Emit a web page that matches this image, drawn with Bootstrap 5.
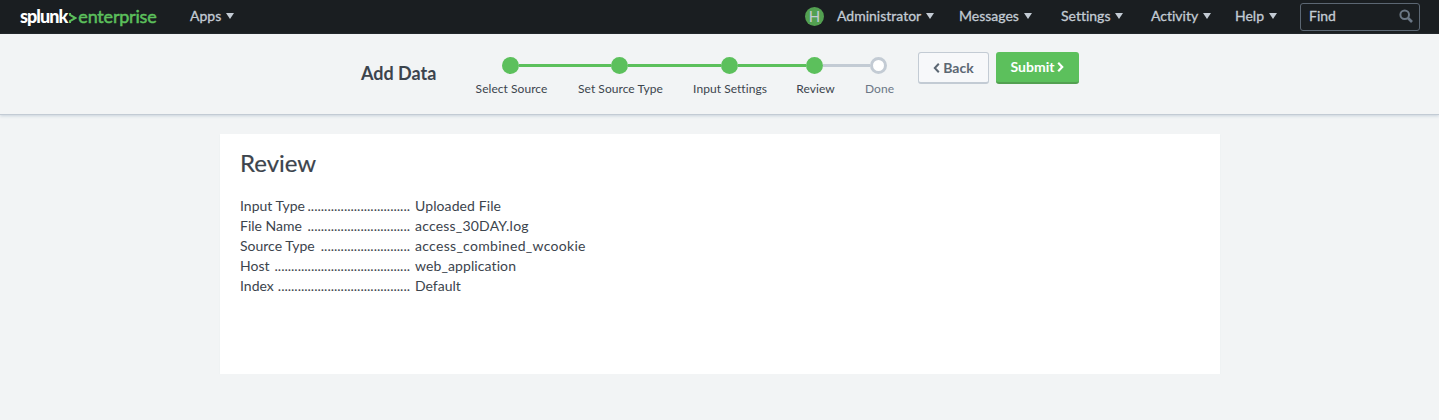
<!DOCTYPE html>
<html lang="en">
<head>
<meta charset="utf-8">
<meta name="viewport" content="width=device-width, initial-scale=1">
<title>Add Data - Review</title>
<link href="https://cdn.jsdelivr.net/npm/bootstrap@5.3.0/dist/css/bootstrap.min.css" rel="stylesheet">
<style>
  body { background: #f2f4f5; color: #3c444d; font: 14px/20px Lato, "Liberation Sans", sans-serif; font-variant-ligatures: none; overflow: hidden; }
  .topbar { height: 34px; background: #1a1e21; color: #c3cbd4; font-size: 14px; padding: 0 19px 0 20px; }
  .topbar a { color: inherit; text-decoration: none; white-space: nowrap; }
  .brand { width: 170px; font-size: 18px; line-height: 34px; margin-top: -2px; }
  .brand-a { color: #fff; font-weight: 900; letter-spacing: -.95px; }
  .brand-b { color: #5cc05c; letter-spacing: -.2px; -webkit-text-stroke: .5px; }
  .brand-b svg { margin: 0 1px 0 2px; vertical-align: -1px; }
  .menu { -webkit-text-stroke: .3px; line-height: 32px; height: 34px; }
  .menu::after { content: ""; display: inline-block; margin-left: 5px; vertical-align: 2px; border: 4px solid transparent; border-top: 6px solid #c3cbd4; border-bottom: 0; }
  .w-admin { width: 122px; } .w-msg { width: 102px; } .w-set { width: 90px; } .w-act { width: 84px; } .w-help { width: 65px; }
  .avatar { width: 19px; height: 19px; background: #53a051; margin: -2px 13px 0 0; font-size: 15px; line-height: 19px; }
  .find { width: 120px; height: 28px; border: 1px solid #5c6773; border-radius: 3px; padding: 0 6px 2px 8px; -webkit-text-stroke: .3px; }
  .header { height: 80px; box-shadow: 0 1px 0 #c3cbd4, 0 2px 3px #c8d2dc; padding-left: 361px; }
  .header h1 { width: 98px; margin: 29px 0 0; font-size: 18px; line-height: 20px; font-weight: 700; white-space: nowrap; }
  .steps { margin-top: 22px; font-size: 12px; }
  .track { height: 18px; }
  .track i { flex: 1; height: 3px; background: #5cc05c; }
  .track b { width: 17px; height: 17px; border-radius: 50%; background: #5cc05c; }
  .track i.rest { background: #c3cbd4; } .track i.none { background: none; }
  .track b.open { background: #fff; border: 3px solid #c3cbd4; }
  .s-select { width: 103px; } .s-input { width: 104px; } .s-type { width: 115px; } .s-review { width: 67px; } .s-done { width: 61px; color: #6b7785; }
  .step-name { line-height: 16px; margin-top: 7px; padding-left: 2px; white-space: nowrap; letter-spacing: .05px; }
  .action { height: 32px; margin-top: 18px; padding: 0; border-radius: 3px; font-size: 14px; font-weight: 700; gap: 3px; line-height: 20px; }
  .back { width: 71px; margin-left: 9px; background: #f7f8fa; border: 1px solid #c3cbd4; border-bottom-width: 2px; color: #5c6773; }
  .submit { width: 83px; margin-left: 7px; background: #5cc05c; border: 0; border-bottom: 2px solid #53a051; color: #fff; }
  .panel { width: 1000px; height: 240px; margin: 20px 0 0 220px; padding: 14px 20px; background: #fff; box-shadow: 0 1px 1px #dfe4eb; }
  .panel h2 { font-size: 24px; line-height: 30px; margin: 0 0 18px; font-weight: 400; -webkit-text-stroke: .2px; }
  .term { width: 170px; white-space: nowrap; margin-right: 5px; }
  .v1 { letter-spacing: .1px; } .v2 { letter-spacing: .2px; } .v3 { letter-spacing: .3px; } .v4 { letter-spacing: .1px; }
</style>
</head>
<body>
<nav class="topbar d-flex align-items-center">
  <a href="#" class="brand"><span class="brand-a">splunk</span><span class="brand-b"><svg width="8" height="12" viewBox="0 0 8 12" fill="none" stroke="currentColor" stroke-width="2"><path d="M1 1v2l5.5 3L1 9v2"/></svg>enterprise</span></a>
  <a href="#" class="menu me-auto">Apps</a>
  <span class="avatar rounded-circle text-center">H</span>
  <a href="#" class="menu w-admin">Administrator</a>
  <a href="#" class="menu w-msg">Messages</a>
  <a href="#" class="menu w-set">Settings</a>
  <a href="#" class="menu w-act">Activity</a>
  <a href="#" class="menu w-help">Help</a>
  <div class="find d-flex align-items-center justify-content-between">Find
    <svg width="14" height="14" viewBox="0 0 14 14" fill="none" stroke="#6b7785"><circle cx="5.7" cy="5.7" r="4.3" stroke-width="2"/><path d="M9 9l4 4" stroke-width="2.6"/></svg>
  </div>
</nav>
<header class="header d-flex align-items-start">
  <h1>Add Data</h1>
  <div class="steps d-flex text-center">
    <div class="s-select"><div class="track d-flex align-items-center"><i class="none"></i><b></b><i></i></div><div class="step-name">Select Source</div></div>
    <div class="s-type"><div class="track d-flex align-items-center"><i></i><b></b><i></i></div><div class="step-name">Set Source Type</div></div>
    <div class="s-input"><div class="track d-flex align-items-center"><i></i><b></b><i></i></div><div class="step-name">Input Settings</div></div>
    <div class="s-review"><div class="track d-flex align-items-center"><i></i><b></b><i class="rest"></i></div><div class="step-name">Review</div></div>
    <div class="s-done"><div class="track d-flex align-items-center"><i class="rest"></i><b class="open"></b><i class="none"></i></div><div class="step-name">Done</div></div>
  </div>
  <button class="btn action back d-flex align-items-center justify-content-center"><svg width="7" height="10" viewBox="0 0 7 10" fill="none" stroke="currentColor" stroke-width="2"><path d="M5.8 .8L1.8 5l4 4.2"/></svg>Back</button>
  <button class="btn action submit d-flex align-items-center justify-content-center">Submit<svg width="7" height="10" viewBox="0 0 7 10" fill="none" stroke="currentColor" stroke-width="2.2"><path d="M1.2 .8l4 4.2-4 4.2"/></svg></button>
</header>
<main class="panel">
  <h2>Review</h2>
  <div class="d-flex"><div class="term d-flex justify-content-between"><span>Input Type</span><span>...............................</span></div><span class="v1">Uploaded File</span></div>
  <div class="d-flex"><div class="term d-flex justify-content-between"><span>File Name</span><span>...............................</span></div><span class="v2">access_30DAY.log</span></div>
  <div class="d-flex"><div class="term d-flex justify-content-between"><span>Source Type</span><span>...........................</span></div><span class="v3">access_combined_wcookie</span></div>
  <div class="d-flex"><div class="term d-flex justify-content-between"><span>Host</span><span>.........................................</span></div><span class="v4">web_application</span></div>
  <div class="d-flex"><div class="term d-flex justify-content-between"><span>Index</span><span>........................................</span></div><span class="v5">Default</span></div>
</main>
<script src="https://cdn.jsdelivr.net/npm/bootstrap@5.3.0/dist/js/bootstrap.bundle.min.js"></script>
</body>
</html>
